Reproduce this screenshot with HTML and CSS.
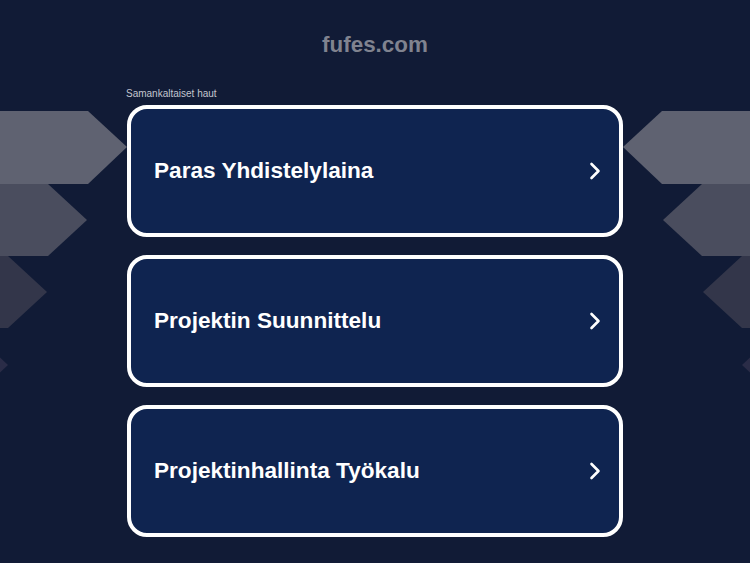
FILE: index.html
```html
<!DOCTYPE html>
<html lang="fi">
<head>
<meta charset="utf-8">
<title>fufes.com</title>
<link rel="stylesheet" href="styles.css">
</head>
<body>
<svg class="backdrop" width="750" height="563" viewBox="0 0 750 563" aria-hidden="true">
  <polygon points="0,111 88,111 127,147 88,184 0,184" fill="#5f6271"/>
  <polygon points="0,184 48,184 87,220 48,256 0,256" fill="#4a4d5e"/>
  <polygon points="0,256 8,256 47,292 8,328 0,328" fill="#33364a"/>
  <polygon points="-31,328 8,365 -31,402" fill="#2a2c47"/>
  <polygon points="750,111 662,111 623,147 662,184 750,184" fill="#5f6271"/>
  <polygon points="750,184 702,184 663,220 702,256 750,256" fill="#4a4d5e"/>
  <polygon points="750,256 742,256 703,292 742,328 750,328" fill="#33364a"/>
  <polygon points="781,328 742,365 781,402" fill="#2a2c47"/>
</svg>
<main class="page">
  <h1 class="domain">fufes.com</h1>
  <p class="label">Samankaltaiset haut</p>
  <ul class="links">
    <li><a class="card" href="#"><span class="card-text">Paras Yhdistelylaina</span><svg class="chev" width="12" height="18" viewBox="0 0 12 18"><path d="M2.5 2 L9.5 9 L2.5 16" fill="none" stroke="#fff" stroke-width="2.6" stroke-linecap="round" stroke-linejoin="round"/></svg></a></li>
    <li><a class="card" href="#"><span class="card-text">Projektin Suunnittelu</span><svg class="chev" width="12" height="18" viewBox="0 0 12 18"><path d="M2.5 2 L9.5 9 L2.5 16" fill="none" stroke="#fff" stroke-width="2.6" stroke-linecap="round" stroke-linejoin="round"/></svg></a></li>
    <li><a class="card" href="#"><span class="card-text">Projektinhallinta Työkalu</span><svg class="chev" width="12" height="18" viewBox="0 0 12 18"><path d="M2.5 2 L9.5 9 L2.5 16" fill="none" stroke="#fff" stroke-width="2.6" stroke-linecap="round" stroke-linejoin="round"/></svg></a></li>
  </ul>
</main>
</body>
</html>
```

FILE: styles.css
```css
html, body {
  margin: 0;
  padding: 0;
}
body {
  background: #111b36;
  font-family: "Liberation Sans", Arial, sans-serif;
  min-height: 563px;
  position: relative;
  overflow: hidden;
}
.backdrop {
  position: absolute;
  left: 0;
  top: 0;
  z-index: 0;
}
.page {
  position: relative;
  z-index: 1;
  width: 496px;
  margin: 0 auto;
  padding-top: 32px;
}
.domain {
  margin: 0;
  font-size: 22.4px;
  line-height: 26px;
  font-weight: bold;
  text-align: center;
  color: #80838f;
}
.label {
  margin: 30px 0 5px -1px;
  font-size: 10px;
  line-height: 12px;
  color: #c3c6cf;
}
.links {
  list-style: none;
  margin: 0;
  padding: 0;
  display: flex;
  flex-direction: column;
  gap: 18px;
}
.card {
  box-sizing: border-box;
  height: 132px;
  display: flex;
  align-items: center;
  justify-content: space-between;
  padding: 0 18px 0 23px;
  background: #0f2450;
  border: 4px solid #ffffff;
  border-radius: 20px;
  text-decoration: none;
}
.card-text {
  color: #ffffff;
  font-size: 22.6px;
  font-weight: bold;
  line-height: 26px;
}
.chev {
  display: block;
}
```
